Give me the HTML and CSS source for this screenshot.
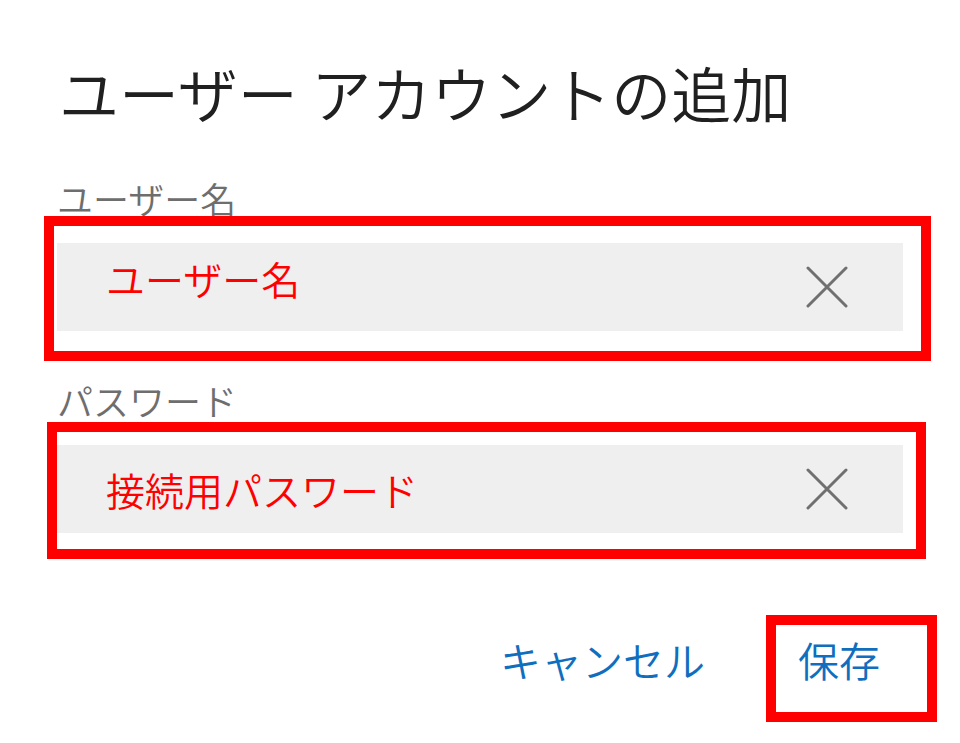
FILE: index.html
```html
<!DOCTYPE html>
<html lang="ja">
<head>
  <meta charset="UTF-8" />
  <title>ユーザー アカウントの追加</title>
  <link rel="stylesheet" href="styles.css">
</head>
<body>
  <div class="dialog">
    <h1>ユーザー アカウントの追加</h1>

    <div class="group">
      <label class="field-label">ユーザー名</label>
      <div class="field">
        <span class="field-value raised">ユーザー名</span>
        <svg class="clear" width="42" height="42" viewBox="0 0 42 42">
          <path d="M2 2 L40 40 M40 2 L2 40" />
        </svg>
        <div class="mark mark-user"></div>
      </div>
    </div>

    <div class="group">
      <label class="field-label">パスワード</label>
      <div class="field">
        <span class="field-value">接続用パスワード</span>
        <svg class="clear" width="42" height="42" viewBox="0 0 42 42">
          <path d="M2 2 L40 40 M40 2 L2 40" />
        </svg>
        <div class="mark mark-pass"></div>
      </div>
    </div>

    <div class="actions">
      <button class="btn">キャンセル</button>
      <div class="save-mark">
        <button class="btn">保存</button>
      </div>
    </div>
  </div>
</body>
</html>
```

FILE: styles.css
```css
body {
  margin: 0;
  background: #fff;
  font-family: "Noto Sans CJK JP", "Noto Sans", sans-serif;
  font-weight: 350;
}
.dialog {
  width: 846px;
  padding: 62px 57px 24px;
}
h1 {
  margin: 0 0 58px;
  font-size: 60px;
  font-weight: 350;
  line-height: 1;
  color: #202020;
  padding-left: 2px;
}
.group {
  margin-bottom: 51px;
}
.field-label {
  display: block;
  font-size: 36px;
  line-height: 1;
  color: #6e6e6e;
  margin-bottom: 27px;
}
.field {
  position: relative;
  display: flex;
  align-items: center;
  justify-content: space-between;
  height: 88px;
  background: #efefef;
  padding: 0 55px 0 49px;
}
.field-value {
  font-size: 39px;
  line-height: 1;
  color: #ff0000;
}
.field-value.raised {
  margin-bottom: 18px;
}
.clear path {
  stroke: #707070;
  stroke-width: 3;
  stroke-linecap: round;
  fill: none;
}
.mark {
  position: absolute;
  border: 10px solid #ff0000;
  pointer-events: none;
}
.mark-user {
  top: -27px;
  left: -13px;
  right: -28px;
  bottom: -30px;
}
.mark-pass {
  top: -23px;
  left: -10px;
  right: -23px;
  bottom: -26px;
}
.actions {
  display: flex;
  justify-content: flex-end;
  align-items: baseline;
  gap: 61px;
  margin-top: 82px;
  margin-right: -34px;
}
.save-mark {
  border: 10px solid #ff0000;
  padding: 14px 47px 30px 22px;
}
.btn {
  border: 0;
  background: none;
  padding: 0;
  font-family: inherit;
  font-weight: 350;
  font-size: 41px;
  line-height: 1;
  color: #106ebe;
}
```
